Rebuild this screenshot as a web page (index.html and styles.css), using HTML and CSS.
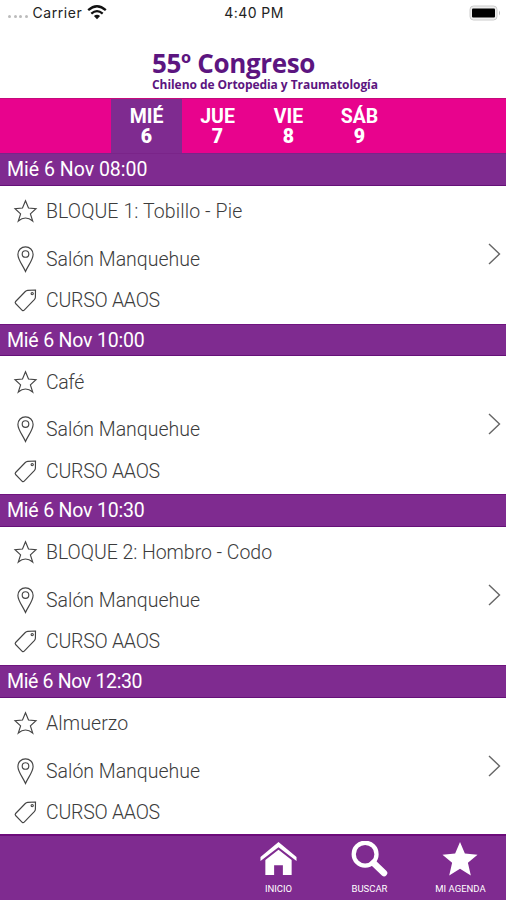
FILE: index.html
```html
<!DOCTYPE html>
<html lang="es">
<head>
<meta charset="utf-8">
<title>55º Congreso</title>
<link rel="stylesheet" href="styles.css">
</head>
<body>
<svg width="0" height="0" class="defs">
  <symbol id="star" viewBox="0 0 24 24"><path d="M12 1.8 15 9l7.5.6-5.6 5.2 2.3 7.2Q12 16 4.8 22l2.3-7.2L1.5 9.6 9 9Z"/></symbol>
  <symbol id="pin" viewBox="0 0 24 28"><path d="M12 26.5C9.5 20.5 4.4 14.7 4.4 9.4a7.6 7.6 0 0 1 15.2 0C19.6 14.7 14.5 20.5 12 26.5Z"/><circle cx="12" cy="9" r="3.3"/></symbol>
  <symbol id="tag" viewBox="0 0 24 24"><path d="M22 2 14.2 2.4Q12.8 2.5 11.8 3.5L2.1 13.5Q1.2 14.5 2.1 15.5L8.7 22.3Q9.7 23.2 10.7 22.2L20.8 11.7Q21.8 10.6 21.9 9.3Z"/><circle cx="18.7" cy="5.6" r="1.1"/></symbol>
</svg>
<div class="app">
  <header class="status">
    <div class="carrier"><span class="dots"><i></i><i></i><i></i><i></i></span><span class="network">Carrier</span>
      <svg width="20" height="15" viewBox="0 0 20 15"><g fill="none" stroke="#111" stroke-width="2.3"><path d="M1.2 5.2Q10-2.6 18.8 5.2M4.3 8.6Q10 3.6 15.7 8.6"/></g><path d="M6.9 11.1Q10 8.6 13.1 11.1L10 14.2Z" fill="#111"/></svg>
    </div>
    <span class="clock">4:40 PM</span>
    <svg class="battery" width="33" height="16" viewBox="0 0 33 16"><rect x="1" y="1" width="27" height="14" rx="3.5" fill="#eee" stroke="#ccc"/><rect x="3" y="3.5" width="23" height="9" rx="1" fill="#000"/><path d="M30 5.5q2 2.5 0 5z" fill="#bbb"/></svg>
  </header>
  <div class="brand"><div class="title">55º Congreso</div><div class="subtitle">Chileno de Ortopedia y Traumatología</div></div>
  <nav class="days">
    <div class="day active">MIÉ<b>6</b></div><div class="day">JUE<b>7</b></div><div class="day">VIE<b>8</b></div><div class="day">SÁB<b>9</b></div>
  </nav>
  <main class="schedule">
    <section>
      <h2>Mié 6 Nov 08:00</h2>
      <div class="event"><div class="lines">
        <div class="line"><svg class="icon"><use href="#star"/></svg><span class="name">BLOQUE 1: Tobillo - Pie</span></div>
        <div class="line"><svg class="icon pin"><use href="#pin"/></svg><span class="room">Salón Manquehue</span></div>
        <div class="line"><svg class="icon"><use href="#tag"/></svg><span class="course">CURSO AAOS</span></div>
      </div><svg class="chevron" viewBox="0 0 13 22"><path d="M1 1 11.5 11 1 21"/></svg></div>
    </section>
    <section>
      <h2 class="late">Mié 6 Nov 10:00</h2>
      <div class="event"><div class="lines">
        <div class="line"><svg class="icon"><use href="#star"/></svg><span class="name short">Café</span></div>
        <div class="line"><svg class="icon pin"><use href="#pin"/></svg><span class="room">Salón Manquehue</span></div>
        <div class="line"><svg class="icon"><use href="#tag"/></svg><span class="course">CURSO AAOS</span></div>
      </div><svg class="chevron" viewBox="0 0 13 22"><path d="M1 1 11.5 11 1 21"/></svg></div>
    </section>
    <section>
      <h2 class="late">Mié 6 Nov 10:30</h2>
      <div class="event"><div class="lines">
        <div class="line"><svg class="icon"><use href="#star"/></svg><span class="name long">BLOQUE 2: Hombro - Codo</span></div>
        <div class="line"><svg class="icon pin"><use href="#pin"/></svg><span class="room">Salón Manquehue</span></div>
        <div class="line"><svg class="icon"><use href="#tag"/></svg><span class="course">CURSO AAOS</span></div>
      </div><svg class="chevron" viewBox="0 0 13 22"><path d="M1 1 11.5 11 1 21"/></svg></div>
    </section>
    <section>
      <h2 class="late last">Mié 6 Nov 12:30</h2>
      <div class="event"><div class="lines">
        <div class="line"><svg class="icon"><use href="#star"/></svg><span class="name">Almuerzo</span></div>
        <div class="line"><svg class="icon pin"><use href="#pin"/></svg><span class="room">Salón Manquehue</span></div>
        <div class="line"><svg class="icon"><use href="#tag"/></svg><span class="course">CURSO AAOS</span></div>
      </div><svg class="chevron" viewBox="0 0 13 22"><path d="M1 1 11.5 11 1 21"/></svg></div>
    </section>
  </main>
  <footer class="tabs">
    <div class="tab"><svg viewBox="0 0 38 38"><path d="M19 1 37.5 16.5v4L19 6.5 .5 20.5v-4Z"/><path d="M19 9 32.5 19.5V35h-9V25h-9v10h-9V19.5Z"/></svg><span>INICIO</span></div>
    <div class="tab"><svg viewBox="0 0 38 38"><circle cx="14.5" cy="13.5" r="11.7" fill="none" stroke="#fff" stroke-width="4.4"/><path d="m23 22.5 11 10.5" stroke="#fff" stroke-width="6.5" stroke-linecap="round"/></svg><span>BUSCAR</span></div>
    <div class="tab"><svg viewBox="0 0 38 38"><path d="m18.5 1 5 11.8 13 1.2-9.9 8.4 3 13.1-11.1-7-11.1 7 3-13.1L.5 14l13-1.2Z"/></svg><span>MI AGENDA</span></div>
  </footer>
</div>
</body>
</html>
```
FILE: styles.css
```css
* { box-sizing: border-box; }
body { margin: 0; background: #fff; font-family: Roboto, "Liberation Sans", sans-serif; }
.defs { display: block; }
.app { width: 506px; height: 900px; overflow: hidden; display: flex; flex-direction: column; }
.status { height: 25px; flex: none; display: grid; grid-template-columns: 1fr auto 1fr; align-items: center; padding: 0 4px 0 7px; font: 14px Inter, sans-serif; color: #222; }
.carrier { display: flex; align-items: center; }
.dots { display: flex; gap: 2.5px; margin: 8px 5px 0 1px; }
.dots i { width: 3px; height: 3px; border-radius: 50%; background: #bbb; }
.network { letter-spacing: .55px; margin-right: 5px; }
.clock { letter-spacing: .45px; margin-right: 1px; }
.battery { justify-self: end; }
.brand { height: 73px; flex: none; padding: 23px 0 0 152px; color: #5c1580; font-family: "Open Sans", "Noto Sans", sans-serif; font-weight: 700; white-space: nowrap; }
.title { font-size: 26px; line-height: 30px; letter-spacing: -.35px; }
.subtitle { font-size: 12px; line-height: 13px; letter-spacing: -.06px; }
.days { height: 55px; flex: none; background: #e8038d; border-top: 1px solid #c50b7b; padding-left: 111px; display: flex; color: #fff; }
.day { width: 71px; text-align: center; font-weight: 700; font-size: 19.5px; line-height: 19.5px; padding-top: 8px; }
.day b { display: block; }
.active { background: #7f2b90; }
.schedule { height: 680.5px; flex: none; overflow: hidden; }
section { height: 170.7px; }
h2 { margin: 0; height: 32.5px; background: #7f2b90; border-top: 1px solid #7a2489; border-bottom: 1px solid #651178; color: #fff; padding-left: 7px; font-size: 19.5px; font-weight: 400; line-height: 31px; white-space: nowrap; }
.late { letter-spacing: -.2px; border-top-color: #6f147f; }
.last { letter-spacing: -.35px; }
.event { display: flex; justify-content: space-between; height: 138.2px; padding: 0 5px 0 13px; }
.lines { display: grid; grid-template-rows: 51px 44px 39px; }
.line { display: flex; align-items: center; gap: 8px; color: #3c3c3c; font-size: 19.5px; font-weight: 300; white-space: nowrap; }
.line span { padding-top: 1px; }
.name { letter-spacing: .1px; }
.short { letter-spacing: -.4px; }
.long { letter-spacing: -.04px; }
.course { letter-spacing: -.25px; }
.icon { width: 25px; height: 24px; fill: none; stroke: #444; stroke-width: 1.15; }
.pin { height: 28px; }
.chevron { width: 13px; height: 22px; margin-top: 57px; fill: none; stroke: #666; stroke-width: 1.4; }
.tabs { height: 66.5px; flex: none; background: #7f2b90; border-top: 2px solid #6c0c7a; padding-left: 233px; display: flex; }
.tab { width: 91px; flex: none; display: flex; flex-direction: column; align-items: center; padding-top: 5px; color: #fff; font-size: 9.5px; line-height: 11px; white-space: nowrap; }
.tab svg { width: 37px; height: 37px; fill: #fff; margin-bottom: 5px; }
```
